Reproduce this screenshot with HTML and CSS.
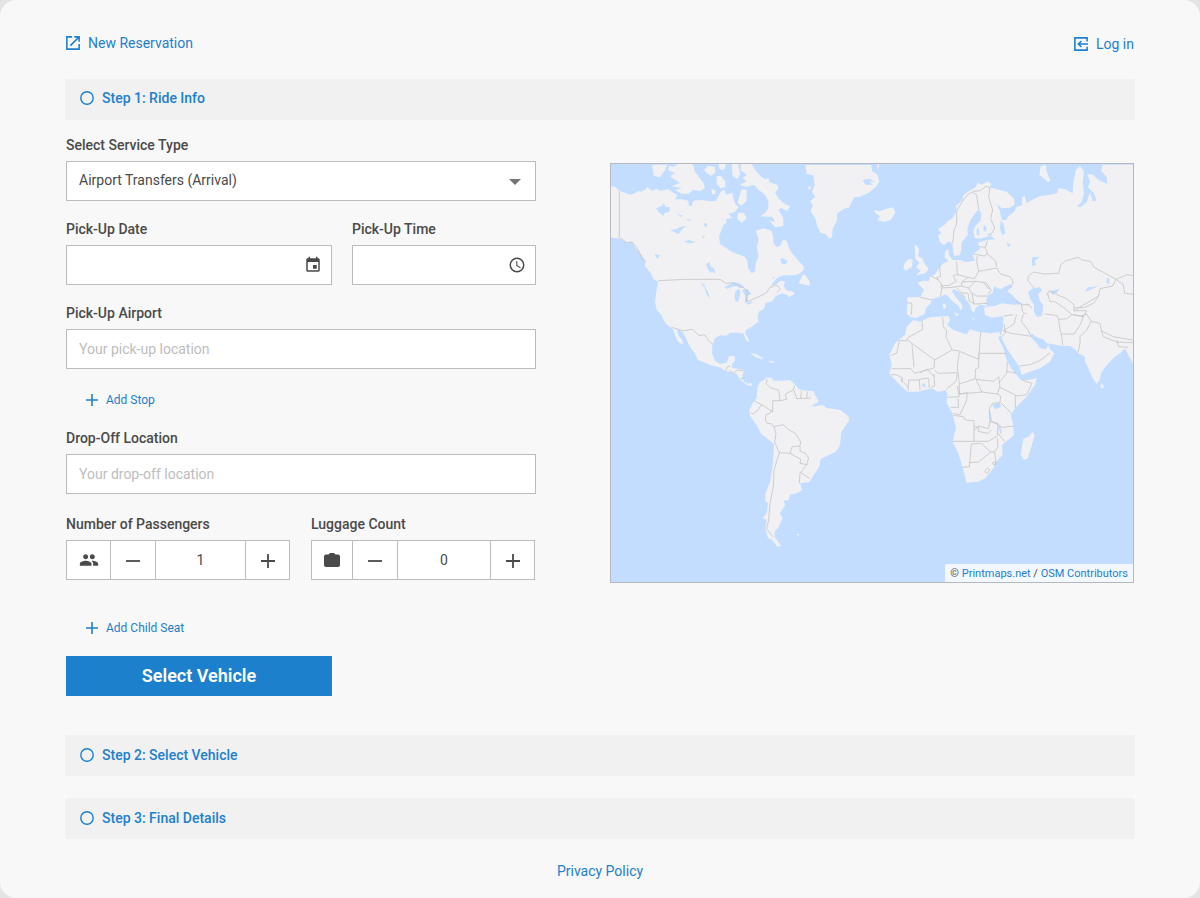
FILE: index.html
```html
<!DOCTYPE html>
<html lang="en">
<head>
<meta charset="utf-8">
<meta name="viewport" content="width=device-width, initial-scale=1">
<title>New Reservation</title>
<link rel="stylesheet" href="styles.css">
</head>
<body>
<main class="card">
  <header class="top">
    <a class="link" href="#new">
      <svg class="icon" viewBox="0 0 16 16" aria-hidden="true"><path d="M7 1H1v14h14V9M9.500 1H15v5.500M14.500 1.500 5 11"/></svg>
      New Reservation
    </a>
    <a class="link link-login" href="#login">
      <svg class="icon" viewBox="0 0 16 16" aria-hidden="true"><path d="M15 5V1H1v14h14V11M16 8H5.500M8.500 4.500 5 8l3.500 3.500"/></svg>
      Log in
    </a>
  </header>

  <h2 class="step"><button class="step-button" type="button" aria-expanded="true"><svg class="ring" viewBox="0 0 14 14" aria-hidden="true"><circle cx="7" cy="7" r="6.200"/></svg>Step 1: Ride Info</button></h2>

  <section class="ride">
    <form class="form">
      <div class="field">
        <label for="service">Select Service Type</label>
        <div class="control">
          <select id="service"><option>Airport Transfers (Arrival)</option></select>
          <svg class="caret" viewBox="0 0 12 6" aria-hidden="true"><path d="M0 0h12L6 6z"/></svg>
        </div>
      </div>
      <div class="when">
        <div class="field">
          <label for="date">Pick-Up Date</label>
          <div class="control">
            <input id="date" type="text">
            <svg class="field-icon" viewBox="0 0 24 24" aria-hidden="true"><path d="M17 12h-5v5h5v-5zM16 1v2H8V1H6v2H5c-1.100 0-2 .9-2 2v14c0 1.100.9 2 2 2h14c1.100 0 2-.9 2-2V5c0-1.100-.9-2-2-2h-1V1h-2zm3 18H5V8h14v11z"/></svg>
          </div>
        </div>
        <div class="field">
          <label for="time">Pick-Up Time</label>
          <div class="control">
            <input id="time" type="text">
            <svg class="field-icon" viewBox="0 0 24 24" aria-hidden="true"><path d="M12 2a10 10 0 1 0 0 20 10 10 0 0 0 0-20zm0 18a8 8 0 1 1 0-16 8 8 0 0 1 0 16zm.5-13H11v6l5.200 3.200.8-1.300-4.500-2.700z"/></svg>
          </div>
        </div>
      </div>
      <div class="field">
        <label for="pickup">Pick-Up Airport</label>
        <input id="pickup" type="text" placeholder="Your pick-up location">
      </div>
      <button class="add add-stop" type="button"><svg class="plus" viewBox="0 0 12 12" aria-hidden="true"><path d="M6 0v12M0 6h12"/></svg>Add Stop</button>
      <div class="field">
        <label for="dropoff">Drop-Off Location</label>
        <input id="dropoff" type="text" placeholder="Your drop-off location">
      </div>
      <div class="counts">
        <div class="field">
          <label for="passengers">Number of Passengers</label>
          <div class="stepper">
            <span class="cell"><svg class="glyph" viewBox="0 0 24 24" aria-hidden="true"><path d="M16 11c1.660 0 2.990-1.340 2.990-3S17.660 5 16 5s-3 1.340-3 3 1.340 3 3 3zm-8 0c1.660 0 2.990-1.340 2.990-3S9.660 5 8 5 5 6.340 5 8s1.340 3 3 3zm0 2c-2.330 0-7 1.170-7 3.500V19h14v-2.500C15 14.170 10.330 13 8 13zm8 0c-.29 0-.62.02-.97.05 1.160.84 1.970 1.970 1.970 3.450V19h6v-2.500c0-2.330-4.670-3.500-7-3.500z"/></svg></span>
            <button class="cell" type="button" aria-label="Fewer passengers"><svg class="sign" viewBox="0 0 14 14" aria-hidden="true"><path d="M0 7h14"/></svg></button>
            <input id="passengers" type="text" inputmode="numeric" value="1">
            <button class="cell" type="button" aria-label="More passengers"><svg class="sign" viewBox="0 0 14 14" aria-hidden="true"><path d="M0 7h14M7 0v14"/></svg></button>
          </div>
        </div>
        <div class="field">
          <label for="luggage">Luggage Count</label>
          <div class="stepper stepper-luggage">
            <span class="cell"><svg class="bag" viewBox="0 0 16 14" aria-hidden="true"><path d="M2 1.500h2.500L6 0h4l1.500 1.500H14a2 2 0 0 1 2 2V12a2 2 0 0 1-2 2H2a2 2 0 0 1-2-2V3.500a2 2 0 0 1 2-2z"/></svg></span>
            <button class="cell" type="button" aria-label="Less luggage"><svg class="sign" viewBox="0 0 14 14" aria-hidden="true"><path d="M0 7h14"/></svg></button>
            <input id="luggage" type="text" inputmode="numeric" value="0">
            <button class="cell" type="button" aria-label="More luggage"><svg class="sign" viewBox="0 0 14 14" aria-hidden="true"><path d="M0 7h14M7 0v14"/></svg></button>
          </div>
        </div>
      </div>
      <button class="add add-seat" type="button"><svg class="plus" viewBox="0 0 12 12" aria-hidden="true"><path d="M6 0v12M0 6h12"/></svg>Add Child Seat</button>
      <button class="submit" type="button">Select Vehicle</button>
    </form>

    <div class="map">
      <svg class="world" viewBox="3 12 1566 1254" preserveAspectRatio="xMidYMid slice" role="img" aria-label="World map">
        <!-- North America -->
        <g>
          <path class="land" d="M0 78 15 80 27 92 45 98 60 104 75 100 84 92 92 95 108 88 112 80 125 92 140 86 150 92 175 88 190 98 202 106 195 118 215 118 235 122 237 138 245 138 250 122 275 120 300 124 318 122 332 96 342 88 348 104 366 98 372 120 376 132 386 142 374 156 354 162 368 174 348 176 350 188 340 196 334 210 327 230 330 252 345 262 365 275 385 283 405 291 412 302 414 325 425 340 434 335 438 308 446 288 440 262 446 240 438 212 460 205 485 212 490 232 490 250 500 262 512 256 518 240 530 242 536 262 546 280 560 296 580 318 582 328 570 340 555 346 520 346 504 352 492 364 482 378 496 374 512 362 524 364 522 378 528 390 545 396 532 406 516 400 498 408 486 424 466 430 462 446 448 454 442 470 446 485 425 500 408 510 405 520 415 535 418 547 408 540 400 520 380 518 360 518 350 527 330 526 315 535 307 555 306 580 315 602 330 612 350 608 358 588 375 588 373 605 366 612 366 624 382 626 402 630 396 652 402 665 415 671 424 668 426 678 412 676 392 660 380 642 360 635 345 632 330 622 310 618 285 608 263 599 255 580 240 560 228 535 218 515 202 508 204 524 216 540 220 555 204 545 196 528 188 506 180 502 165 488 154 464 140 450 135 425 140 390 144 366 130 356 120 336 104 318 108 304 96 288 78 266 66 246 50 248 30 236 0 232z"/>
          <path class="land" d="M128 14H172L165 30 150 52 132 48 127 24zM178 17 190 21 205 11H245L250 17 254 34 265 49 280 69 285 84 270 94 250 89 235 101 215 101 195 91 215 84 185 79 210 69 195 59 180 49 195 39 175 31zM282 29 295 17 315 21 315 39 302 47 290 39zM325 12H348L342 31 328 27zM320 49 332 47 346 64 346 81 332 85 320 71zM365 12H385L390 44 382 57 368 47zM392 12H425L438 34 452 49 465 57 475 54 478 67 502 74 505 87 495 97 505 114 520 129 540 139 532 154 515 144 505 149 520 174 520 199 495 201 478 181 496 186 486 170 450 169 465 159 475 144 475 124 465 104 445 89 432 74 410 81 390 74 410 64 398 54 410 44 392 31zM395 87 410 90 410 122 395 137 382 129 388 110zM384 158 402 160 410 174 396 188 382 178zM304 88 316 90 316 102 306 103zM578 344 584 344 598 362 600 378 566 370zM530 398 546 392 554 402 536 412zM420 578 436 582 458 593 456 598 435 590zM476 602 492 603 490 608 478 607z"/>
          <path class="water" d="M138 145 155 138 162 130 166 140 180 142 178 156 164 158 160 168 146 156zM180 210 198 208 212 200 228 198 216 208 206 222 192 216zM222 246 236 240 258 246 240 250zM200 158 218 168 212 170zM284 188 292 192 288 202 282 198zM276 230 284 226 282 236zM230 176 244 180 234 182zM134 282 150 286 142 298zM288 312 298 306 302 320 312 324 316 342 306 334 302 340 292 324zM344 382 360 372 374 366 392 372 404 382 390 384 380 378 366 380 350 386zM376 394 386 386 392 398 384 426 376 424 374 408zM396 390 412 386 420 396 424 402 412 408 414 424 404 428 406 408zM410 430 426 424 428 428 412 434zM510 298 518 294 532 302 528 312 516 312zM486 350 494 352 492 358zM272 370 286 376 283 378 294 396 300 414 290 404 284 384z"/>
          <path class="border" d="M28 94V232L50 248 66 246 80 262 92 284 100 302M144 362 230 358H330L348 370 368 368 386 378 402 384 412 394 410 426 450 408 470 398 478 384 496 376 502 376 510 388 500 398M184 502 220 512 248 508 266 526 284 525 296 542 308 552M347 632 352 620 362 618M358 630 370 640 382 630 400 632M392 656 404 654"/>
        </g>
        <!-- South America -->
        <g transform="translate(90 390)">
          <path class="land" d="M352 295 358 278 372 270 380 262 396 264 400 272 425 272 450 270 465 284 478 298 498 302 520 304 528 320 536 334 520 350 548 345 560 354 600 360 625 378 628 390 604 425 600 465 588 485 560 498 542 508 538 530 518 560 508 576 480 580 486 600 470 610 450 614 446 630 430 632 436 644 420 670 428 684 415 712 404 726 404 742 424 768 412 770 396 750 384 744 376 716 380 690 368 684 380 670 384 640 376 634 376 612 390 575 398 530 402 462 380 444 362 430 350 405 330 378 328 360 340 336 350 325z"/>
          <path class="land" d="M470 732 478 732 476 738z"/>
          <path class="water" d="M512 350 526 340 540 344 522 348z"/>
          <path class="border" d="M382 266 378 280 392 294 416 300 420 332 398 332 398 366 375 350 342 332M364 344 354 360 340 372 332 368M398 358 390 370 378 374 376 390 382 400 396 402 402 412 408 430 404 456 418 488 450 490 456 470 480 468 482 456 466 430 444 418 430 404 402 410M420 332 440 328 436 312 460 300 464 288M462 302 470 326 512 324M484 302 482 326M502 304 500 324M480 470 480 484 496 490 506 504 500 524 480 520 482 508 450 490M418 488 402 540 400 590 390 640 386 690 380 716 400 742M502 522 480 550 478 580M482 548 510 566"/>
        </g>
        <!-- Greenland and Iceland -->
        <g transform="translate(480 0)">
          <path class="land" d="M106 15H304L306 32 322 44 328 64 318 80 296 98 270 110 252 112 238 142 222 146 200 162 202 180 188 206 186 232 178 236 166 222 152 218 142 200 136 176 122 154 128 136 120 124 136 110 126 96 134 76 130 46 110 42zM112 80 124 80 120 90zM314 150 328 154 350 146 370 142 376 158 362 180 342 186 322 180 330 168 316 160zM322 12 328 14 324 32z"/>
          <path class="water" d="M278 60 300 56 314 66 296 64 310 74 286 74z"/>
        </g>
        <!-- Europe and Asia -->
        <g transform="translate(810 0)">
          <path class="land" d="M217 250 205 244 192 256 180 246 174 226 184 220 174 208 194 194 204 182 218 174 230 152 228 138 246 122 250 106 268 92 288 80 292 68 304 74 324 64 334 72 328 82 350 88 380 95 402 116 404 134 390 143 365 145 350 132 358 148 366 180 378 180 386 168 404 154 408 142 426 136 426 112 434 108 440 130 460 118 480 108 510 104 532 100 534 84 556 88 578 100 580 66 588 30 600 18 612 34 608 70 612 98 604 128 590 138 602 142 620 126 630 96 638 124 650 122 642 100 624 82 630 66 622 42 640 44 656 60 682 72 680 50 664 34 668 14H768V625L745 585 735 565 720 580 705 590 685 610 665 635 658 660 650 672 638 655 625 625 615 605 615 590 595 580 585 568 570 558 545 558 515 552 500 550 490 538 470 532 455 520 450 528 470 550 480 565 498 568 505 555 510 568 523 580 510 605 480 625 450 635 425 645 418 620 400 595 380 565 365 535 362 525 368 510 370 480 370 468 355 470 335 473 315 465 312 445 322 438 300 434 288 442 282 458 274 450 270 434 255 415 238 396 222 388 216 394 228 412 242 428 248 440 242 452 236 438 216 422 198 402 186 408 172 412 155 418 152 430 138 444 134 462 108 474 94 472 80 462 82 412 120 412 132 390 112 368 130 362 146 364 150 350 166 342 178 322 192 308 206 304 194 292 196 274 206 268 206 284 218 300 240 300 258 306 285 302 278 284 292 272 300 268 294 248 320 240 346 238 332 228 300 236 284 234 280 212 286 198 302 182 304 160 296 148 286 160 270 182 262 206 264 224 244 248 244 272 238 286 222 288z"/>
          <path class="land" d="M482 18 498 14 500 34 506 50 512 62 504 66 490 54 478 46zM104 254 112 258 118 270 114 288 128 296 132 310 146 326 136 340 108 346 122 332 108 322 118 308 106 296zM88 296 98 300 96 320 78 332 70 324 74 308zM222 458 236 462 232 470zM188 430 198 434 196 448 190 446zM276 474 286 476 280 480zM664 668 672 680 668 686 662 680z"/>
          <path class="water" d="M318 430 322 408 338 398 342 378 352 384 362 388 374 380 392 372 394 382 382 394 396 404 414 424 430 432 400 434 366 430 344 438 322 440zM444 396 460 384 480 382 486 392 474 402 480 424 490 436 486 468 470 470 462 454 462 434 450 416zM290 208 296 204 298 226 290 224zM312 194 320 204 318 216 310 210zM362 182 370 190 376 220 366 226 360 204zM380 246 392 256 384 262zM456 292 480 290 464 302 468 314 456 318zM614 396 624 382 656 378 630 390zM510 394 538 386 530 400 516 404zM680 354 688 356 688 372 680 370zM322 222 332 220 330 232z"/>
          <path class="border" d="M218 250 222 210 230 192 230 152 250 120 266 102 276 96 290 104 296 148M278 94 302 92 318 78 330 84 326 112 338 150 332 176 344 204 332 226M322 242 316 262 322 282 346 302 350 320M296 260 316 262M280 282 312 288 322 282M290 304 292 288M290 304 296 334 350 324 362 342 390 350 400 366 392 384M230 304 232 344 264 352 284 356 296 334M178 314 182 350 170 352 186 376 182 408M152 348 176 360M182 378 208 376 228 364 220 346 232 344M186 384 216 382 244 378 246 366 264 352M246 366 286 364 318 368 334 392 322 402M244 378 266 384 286 364M266 384 274 398 290 408 322 408M228 382 244 398 264 400 268 424 286 432 322 430M244 398 256 414M276 398 282 434M80 428 96 430 94 464M120 412 156 420M310 368 328 388M462 384 444 362 444 350 460 336 492 342 536 340 542 314 558 302 594 292 606 300 632 304 642 322 676 340 708 358 698 378 660 386 656 408 602 440 582 454 582 434 560 416 540 408 508 392 500 406M708 358 740 344 768 348M708 358 730 374 734 400 768 404M502 398 510 424 526 426 550 442 576 464 560 476 536 478 530 466 494 462M582 444 614 442 640 430 656 408M586 452 620 452 610 470 580 464M576 464 604 468 620 462 634 484 660 490 664 512 700 530 768 542M536 478 540 508 546 534 548 556M546 522 582 522 602 492 610 468M634 484 620 510 600 530 600 550 594 576M664 512 670 530 710 546 760 548M710 540 716 560 744 562M408 422 424 434 448 434M424 434 428 456 440 462M440 430 456 444M400 464 372 468M430 462 424 484 444 510 452 530M410 464 402 492 370 512 394 520 448 528M418 618 450 614 480 602 510 578M372 492 376 520 364 530"/>
        </g>
        <!-- Africa -->
        <g transform="translate(780 420)">
          <path class="land" d="M130 60 150 65 180 52 235 48 240 60 232 75 250 90 290 103 300 88 325 95 360 100 388 96 392 108 384 112 400 145 410 180 425 208 440 225 452 240 476 240 500 234 495 255 470 290 435 325 422 345 430 375 432 405 396 435 398 465 378 485 370 505 345 535 325 545 290 548 280 510 265 460 248 425 258 385 250 350 245 335 230 310 232 280 225 270 205 276 185 265 165 270 145 275 112 275 85 250 58 222 65 195 58 165 75 130 105 105 110 80zM488 396 494 406 484 440 474 474 462 480 452 464 460 416 476 410z"/>
          <path class="water" d="M366 314 388 308 394 320 376 328zM356 330 362 336 366 362 360 362zM384 374 392 380 396 402 390 398zM156 252 166 250 166 262 158 260z"/>
          <path class="border" d="M156 62 158 88 112 114 110 122 88 122 80 160 62 166M112 120 194 180 246 150 228 110 230 92 220 80 218 52M246 150 264 152 326 178 332 96M330 160H408M326 160 326 202 316 208 316 236 268 252 262 200 268 156M194 180 192 204 134 220 122 206 80 206 66 206M126 134 132 202M194 212 206 220 262 218M192 222 194 258 184 262M150 218 172 208 192 230M176 236 178 264M150 270 148 240 116 240 114 272M92 236 114 262M78 224 98 234 94 248M62 224H78M148 238 176 234M262 220 258 244 228 268M268 252 268 282 336 276 318 238 372 244 386 230 390 258 382 282 336 276M262 258 268 290 232 292M268 282 292 278 290 300 270 344 248 340M242 322H266L264 296M382 282 392 288 390 308 368 310 358 326 360 360 356 386 326 378 312 392M386 250 410 220 412 186M410 214 438 220M390 262 442 288 470 284 486 250 456 240M436 286 436 324M392 308 424 340M362 362 398 382 432 378M250 346 280 350 286 360 312 362 312 424 248 424M312 424 356 424 382 408 384 370 360 366M384 400 404 424M332 430 304 432 298 500 276 502M298 488 326 486 362 456 374 456 384 440 382 416M334 430 362 456M374 456 378 490M344 512 352 504 360 510 350 520zM370 486 378 488 376 494 368 492zM312 380 326 382 324 394 354 400 364 390"/>
        </g>
      </svg>
      <p class="credit">© <a href="#printmaps">Printmaps.net</a> / <a href="#osm">OSM Contributors</a></p>
    </div>
  </section>

  <div class="steps">
    <h2 class="step"><button class="step-button" type="button" aria-expanded="false"><svg class="ring" viewBox="0 0 14 14" aria-hidden="true"><circle cx="7" cy="7" r="6.200"/></svg>Step 2: Select Vehicle</button></h2>
    <h2 class="step"><button class="step-button" type="button" aria-expanded="false"><svg class="ring" viewBox="0 0 14 14" aria-hidden="true"><circle cx="7" cy="7" r="6.200"/></svg>Step 3: Final Details</button></h2>
  </div>

  <footer class="footer"><a class="link" href="#privacy">Privacy Policy</a></footer>
</main>
</body>
</html>
```
FILE: styles.css
```css
* {
  box-sizing: border-box;
}

body {
  margin: 0;
  background: #e4e4e4;
  color: #4a4a4a;
  font-family: Roboto, "Liberation Sans", sans-serif;
  font-size: 14px;
  line-height: 20px;
}

button,
input,
select {
  font: inherit;
  color: inherit;
}

button {
  padding: 0;
  border: 0;
  background: none;
  cursor: pointer;
}

.card {
  min-height: 100vh;
  padding: 33px 65px 16px;
  border-radius: 16px;
  background: #f8f8f8;
}

.top {
  display: flex;
  align-items: flex-start;
  justify-content: space-between;
  padding: 0 1px;
  margin-bottom: 25px;
}

.link {
  display: inline-flex;
  align-items: center;
  gap: 8px;
  color: #1c80cd;
  text-decoration: none;
}

.link-login {
  padding-top: 1px;
}

.icon {
  width: 14px;
  height: 14px;
  fill: none;
  stroke: currentColor;
  stroke-width: 1.8;
}

.step {
  margin: 0;
  font-size: 14px;
  font-weight: 500;
  background: #f1f1f1;
  border-radius: 2px;
}

.step-button {
  display: flex;
  align-items: center;
  gap: 8px;
  width: 100%;
  padding: 9px 15px 12px;
  color: #1c80cd;
}

.ring {
  width: 14px;
  height: 14px;
  fill: none;
  stroke: currentColor;
  stroke-width: 1.4;
}

.steps {
  display: grid;
  gap: 22px;
}

.steps .step-button {
  padding: 10px 15px 11px;
}

.ride {
  display: grid;
  grid-template-columns: 470fr 524fr;
  column-gap: 74px;
  align-items: start;
  padding: 15px 1px 39px;
}

.form {
  display: flex;
  flex-direction: column;
  gap: 18px;
}

.field {
  display: flex;
  flex-direction: column;
  gap: 6px;
  min-width: 0;
}

.field label {
  font-weight: 500;
}

.control {
  display: grid;
  align-items: center;
}

.control > * {
  grid-area: 1 / 1;
}

.field input,
.field select {
  width: 100%;
  height: 40px;
  padding: 0 12px;
  border: 1px solid #bcbcbc;
  border-radius: 0;
  background: #fff;
}

.field select {
  appearance: none;
  padding-bottom: 2px;
}

.field input::placeholder {
  color: #bdbdbd;
  opacity: 1;
}

.caret {
  justify-self: end;
  width: 12px;
  height: 6px;
  margin-top: 2px;
  margin-right: 15px;
  fill: #757575;
  pointer-events: none;
}

.field-icon {
  justify-self: end;
  width: 18px;
  height: 18px;
  margin-right: 10px;
  fill: #4a4a4a;
  pointer-events: none;
}

.when {
  display: grid;
  grid-template-columns: 266fr 184fr;
  gap: 20px;
}

.add {
  display: flex;
  align-items: center;
  align-self: flex-start;
  gap: 8px;
  padding-left: 20px;
  color: #1c80cd;
  font-size: 12px;
  line-height: 20px;
}

.add-stop {
  margin-top: 3px;
}

.add-seat {
  margin-top: 20px;
}

.plus {
  width: 12px;
  height: 12px;
  fill: none;
  stroke: currentColor;
  stroke-width: 1.6;
}

.counts {
  display: grid;
  grid-template-columns: 1fr 1fr;
  gap: 21px;
  padding: 2px 1px 0 0;
}

.stepper {
  display: grid;
  grid-template-columns: 43px 45px 1fr 43px;
  height: 40px;
  border: 1px solid #bcbcbc;
  background: #fff;
}

.stepper-luggage {
  grid-template-columns: 40px 45px 1fr 43px;
}

.cell {
  display: flex;
  align-items: center;
  justify-content: center;
}

.stepper button.cell:nth-child(2) {
  border-left: 1px solid #bcbcbc;
}

.stepper input {
  height: 100%;
  padding: 0;
  border-width: 0 1px;
  text-align: center;
}

.glyph {
  width: 20px;
  height: 20px;
  fill: #4a4a4a;
}

.bag {
  width: 16px;
  height: 14px;
  fill: #4a4a4a;
}

.sign {
  width: 14px;
  height: 14px;
  margin-top: 2px;
  fill: none;
  stroke: #4a4a4a;
  stroke-width: 1.8;
}

.submit {
  width: 266px;
  height: 40px;
  background: #1c80cd;
  color: #fff;
  font-size: 18px;
  font-weight: 600;
}

.map {
  position: relative;
  aspect-ratio: 524 / 420;
  margin-top: 28px;
  overflow: hidden;
  border: 1px solid #b5b9bf;
  background: #c2ddff;
}

.world {
  display: block;
  width: 100%;
  height: 100%;
}

.land {
  fill: #f1f1f3;
}

.water {
  fill: #c2ddff;
}

.border {
  fill: none;
  stroke: #c4c4c4;
  stroke-width: 2.4;
  stroke-linejoin: round;
}

.credit {
  position: absolute;
  right: 0;
  bottom: 0;
  margin: 0;
  padding: 1px 5px 0;
  border-radius: 2px 0 0;
  background: #ffffffcc;
  font-size: 11px;
  line-height: 17px;
}

.credit a {
  color: #1c80cd;
  text-decoration: none;
}

.footer {
  display: flex;
  justify-content: center;
  margin-top: 22px;
}
```
